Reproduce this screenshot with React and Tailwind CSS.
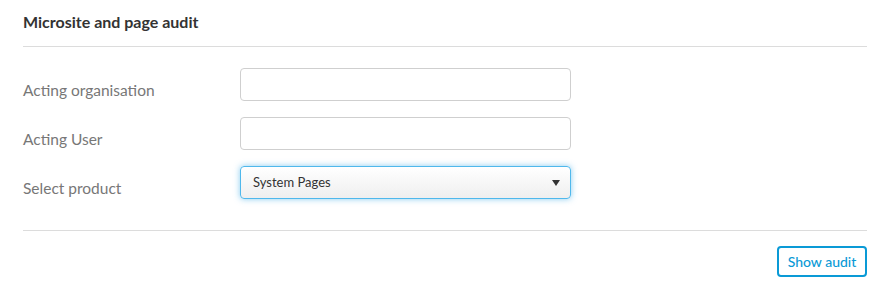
export default function App() {
  const font = { fontFamily: "Lato, 'Open Sans', sans-serif" };
  const labelCls = "w-[217px] text-[15.5px] leading-[20px] text-[#777] pt-[10px]";
  return (
    <div className="w-[874px] h-[287px] bg-white pl-[23px] pr-[7px]" style={font}>
      <div className="h-[47px] border-b border-[#dcdcdc] pt-[12px]">
        <h2 className="text-[16px] leading-[20px] font-bold text-[#333]">Microsite and page audit</h2>
      </div>
      <div className="flex flex-col gap-[16px] pt-[21px] pb-[31px] border-b border-[#dcdcdc]">
        <div className="flex items-center h-[33px]">
          <label className={labelCls}>Acting organisation</label>
          <input className="w-[331px] h-[33px] border border-[#cfcfcf] rounded-[4px] bg-white" />
        </div>
        <div className="flex items-center h-[33px]">
          <label className={labelCls}>Acting User</label>
          <input className="w-[331px] h-[33px] border border-[#cfcfcf] rounded-[4px] bg-white" />
        </div>
        <div className="flex items-center h-[33px]">
          <label className={labelCls}>Select product</label>
          <div className="w-[331px] h-[33px] border border-[#4fb8ec] rounded-[4px] bg-gradient-to-b from-white to-[#efefef] shadow-[0_0_6px_rgba(60,170,230,0.6)] flex items-center justify-between pl-[12px] pr-[10px]">
            <span className="text-[13px] text-[#333]">System Pages</span>
            <svg width="8" height="6" viewBox="0 0 8 6"><path d="M0 0 L8 0 L4 6 Z" fill="#333" /></svg>
          </div>
        </div>
      </div>
      <div className="flex justify-end pt-[15px]">
        <button className="w-[90px] h-[31px] border-2 border-[#0a9ad6] rounded-[4px] text-[#0a9ad6] text-[14px] font-medium">Show audit</button>
      </div>
    </div>
  );
}
